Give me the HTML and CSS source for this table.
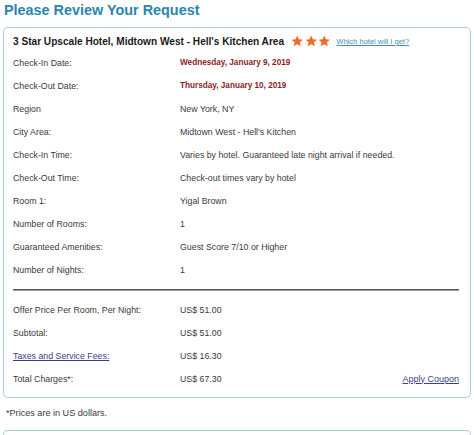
FILE: index.html
```html
<!DOCTYPE html>
<html lang="en">
<head>
<meta charset="utf-8">
<title>Please Review Your Request</title>
<link rel="stylesheet" href="styles.css">
</head>
<body>
<h1 class="title">Please Review Your Request</h1>
<div class="card">
  <div class="card-head">
    <span class="hotel">3 Star Upscale Hotel, Midtown West - Hell's Kitchen Area</span>
    <span class="stars">
      <svg viewBox="0 0 24 24"><path d="M12 1l3.2 7.1 7.8.8-5.9 5.2 1.7 7.7L12 17.8l-6.8 4 1.7-7.7L1 8.9l7.8-.8z"/></svg>
      <svg viewBox="0 0 24 24"><path d="M12 1l3.2 7.1 7.8.8-5.9 5.2 1.7 7.7L12 17.8l-6.8 4 1.7-7.7L1 8.9l7.8-.8z"/></svg>
      <svg viewBox="0 0 24 24"><path d="M12 1l3.2 7.1 7.8.8-5.9 5.2 1.7 7.7L12 17.8l-6.8 4 1.7-7.7L1 8.9l7.8-.8z"/></svg>
    </span>
    <a class="which" href="#">Which hotel will I get?</a>
  </div>
  <div class="rows">
    <div class="row"><span>Check-In Date:</span><span class="date">Wednesday, January 9, 2019</span></div>
    <div class="row"><span>Check-Out Date:</span><span class="date">Thursday, January 10, 2019</span></div>
    <div class="row"><span>Region</span><span>New York, NY</span></div>
    <div class="row"><span>City Area:</span><span>Midtown West - Hell's Kitchen</span></div>
    <div class="row"><span>Check-In Time:</span><span>Varies by hotel. Guaranteed late night arrival if needed.</span></div>
    <div class="row"><span>Check-Out Time:</span><span>Check-out times vary by hotel</span></div>
    <div class="row"><span>Room 1:</span><span>Yigal Brown</span></div>
    <div class="row"><span>Number of Rooms:</span><span>1</span></div>
    <div class="row"><span>Guaranteed Amenities:</span><span>Guest Score 7/10 or Higher</span></div>
    <div class="row"><span>Number of Nights:</span><span>1</span></div>
  </div>
  <div class="divider"></div>
  <div class="rows totals">
    <div class="row"><span>Offer Price Per Room, Per Night:</span><span>US$ 51.00</span></div>
    <div class="row"><span>Subtotal:</span><span>US$ 51.00</span></div>
    <div class="row"><a class="link" href="#">Taxes and Service Fees:</a><span>US$ 16.30</span></div>
    <div class="row"><span>Total Charges*:</span><span>US$ 67.30</span><a class="link coupon" href="#">Apply Coupon</a></div>
  </div>
</div>
<p class="note">*Prices are in US dollars.</p>
<div class="card card-next"></div>
</body>
</html>
```
FILE: styles.css
```css
html, body {
  margin: 0;
  padding: 0;
  background: #ffffff;
  overflow: hidden;
}
body {
  padding: 0 3px;
  font-family: "Liberation Sans", Arial, sans-serif;
  color: #3a3a3a;
  font-size: 8.8px;
}
.title {
  margin: 0;
  font-size: 14.4px;
  line-height: 20px;
  font-weight: bold;
  color: #2a86b0;
  padding-left: 1px;
}
.card {
  margin-top: 7px;
  border: 1px solid #a8d0d0;
  border-radius: 5px;
  padding: 5px 11px 7px 9px;
}
.card-head {
  display: flex;
  align-items: center;
  height: 17px;
}
.hotel {
  font-size: 10.1px;
  font-weight: bold;
  color: #1a1a1a;
}
.stars {
  display: flex;
  gap: 1px;
  margin-left: 7px;
}
.stars svg {
  width: 12.5px;
  height: 12.5px;
  fill: #ef6b2b;
}
.which {
  margin-left: 6px;
  font-size: 7.5px;
  color: #4a8bb0;
  text-decoration: underline;
}
.rows {
  margin-top: 1px;
}
.row {
  display: grid;
  grid-template-columns: 167px 1fr auto;
  align-items: center;
  height: 23px;
  white-space: nowrap;
}
.date {
  font-size: 8.2px;
  font-weight: bold;
  color: #8c1d1d;
}
.divider {
  margin-top: 8px;
  height: 1px;
  background: #5a5a5a;
  border-bottom: 0.5px solid #9a9a9a;
}
.totals {
  margin-top: 7px;
}
.link {
  color: #3d3d8c;
  text-decoration: underline;
}
.coupon {
  font-size: 9px;
}
.note {
  margin: 8px 0 0 3px;
  font-size: 9.1px;
  line-height: 14px;
  color: #3a3a3a;
}
.card-next {
  margin-top: 10px;
  height: 4px;
  padding: 0;
  border-bottom: none;
  border-radius: 5px 5px 0 0;
}
```
